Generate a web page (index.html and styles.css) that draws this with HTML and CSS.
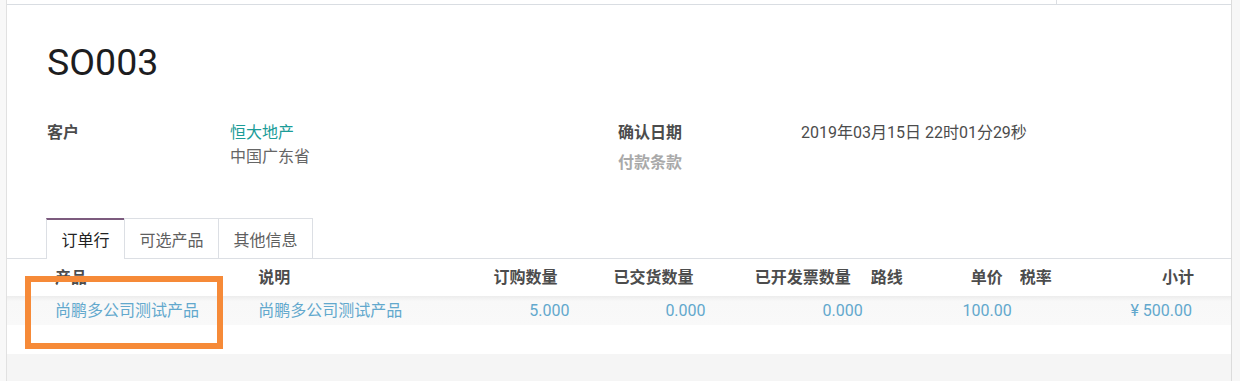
FILE: index.html
```html
<!DOCTYPE html>
<html lang="zh-CN">
<head>
<meta charset="utf-8">
<title>SO003</title>
<link rel="stylesheet" href="styles.css">
</head>
<body>
<div class="page">
  <div class="edge-left"></div>
  <div class="main">
    <div class="topbar"><div class="topbar-left"></div><div class="topbar-right"></div></div>
    <div class="sheet">
      <h1 class="title">SO003</h1>
      <div class="groups">
        <div class="group">
          <div class="label">客户</div>
          <div class="value"><span class="link">恒大地产</span><div class="addr">中国广东省</div></div>
        </div>
        <div class="group">
          <div class="label">确认日期</div>
          <div class="value">2019年03月15日 22时01分29秒</div>
          <div class="label muted">付款条款</div>
          <div class="value"></div>
        </div>
      </div>
      <div class="tabs">
        <div class="tab active">订单行</div>
        <div class="tab">可选产品</div>
        <div class="tab">其他信息</div>
      </div>
      <table class="lines">
        <colgroup>
          <col class="w1"><col class="w2"><col class="w3"><col class="w4"><col class="w5">
          <col class="w6"><col class="w7"><col class="w8"><col class="w9"><col class="w10">
        </colgroup>
        <thead>
          <tr>
            <th class="first">产品</th>
            <th>说明</th>
            <th class="num">订购数量</th>
            <th class="num">已交货数量</th>
            <th class="num">已开发票数量</th>
            <th class="tight">路线</th>
            <th class="num price">单价</th>
            <th class="tight">税率</th>
            <th class="num total">小计</th>
            <th></th>
          </tr>
        </thead>
        <tbody>
          <tr class="data">
            <td class="first">尚鹏多公司测试产品</td>
            <td>尚鹏多公司测试产品</td>
            <td class="num">5.000</td>
            <td class="num">0.000</td>
            <td class="num">0.000</td>
            <td class="tight"></td>
            <td class="num">100.00</td>
            <td class="tight"></td>
            <td class="num">¥ 500.00</td>
            <td></td>
          </tr>
          <tr class="blank">
            <td colspan="10"></td>
          </tr>
        </tbody>
      </table>
    </div>
  </div>
  <div class="edge-right"></div>
</div>
<div class="highlight"></div>
</body>
</html>
```

FILE: styles.css
```css
html, body {
  margin: 0;
  padding: 0;
}
body {
  width: 1240px;
  height: 381px;
  overflow: hidden;
  background: #f5f5f5;
  font-family: Roboto, "Noto Sans CJK SC", sans-serif;
  font-size: 16px;
  color: #4c4c4c;
  position: relative;
}
.page {
  display: flex;
  height: 381px;
}
.edge-left {
  width: 6px;
  background: #f8f8f8;
  border-right: 1px solid #e1e1e1;
}
.edge-right {
  width: 8px;
  background: #f7f7f7;
  border-left: 1px solid #dcdcdc;
}
.main {
  flex: 1;
  display: flex;
  flex-direction: column;
  background: #f5f5f5;
}
.topbar {
  height: 4px;
  display: flex;
  background: #fff;
  border-bottom: 1px solid #d9dde2;
}
.topbar-left {
  width: 1049px;
}
.topbar-right {
  flex: 1;
  border-left: 1px solid #dcdfe3;
}
.sheet {
  background: #fff;
  padding-top: 35px;
}
.title {
  margin: 0;
  padding-left: 40px;
  font-size: 37.5px;
  line-height: 44px;
  font-weight: 400;
  color: #1d1d1f;
}
.groups {
  display: grid;
  grid-template-columns: 571px 571px;
  padding-left: 40px;
  margin-top: 37px;
  line-height: 24px;
}
.group {
  display: grid;
  grid-template-columns: 183px 1fr;
  row-gap: 6px;
  align-content: start;
}
.label {
  font-weight: 700;
  color: #4c4c4c;
}
.label.muted {
  color: #a9a9a9;
}
.value {
  color: #4c4c4c;
}
.link {
  color: #1b9c98;
}
.addr {
  color: #666;
}
.tabs {
  display: flex;
  margin-top: 43px;
  padding-left: 40px;
  border-bottom: 1px solid #dcdfe4;
}
.tab {
  box-sizing: border-box;
  height: 40px;
  padding: 0 14.5px;
  display: flex;
  align-items: center;
  border: 1px solid #dcdfe4;
  border-bottom: none;
  margin-left: -1px;
  color: #5f5f5f;
  background: #fff;
}
.tab.active {
  height: 41px;
  margin-bottom: -1px;
  border-top: 2px solid #7c5b7e;
  color: #222;
  padding-bottom: 1px;
}
.lines {
  width: 100%;
  table-layout: fixed;
  border-collapse: collapse;
  border-spacing: 0;
}
.w1 { width: 243px; }
.w2 { width: 230px; }
.w3 { width: 97px; }
.w4 { width: 136px; }
.w5 { width: 157px; }
.w6 { width: 60px; }
.w7 { width: 89px; }
.w8 { width: 61px; }
.w9 { width: 119px; }
.w10 { width: 31px; }
.lines th, .lines td {
  padding: 0 8px;
  text-align: left;
  white-space: nowrap;
  overflow: hidden;
  line-height: 20px;
}
.lines th {
  height: 37px;
  font-weight: 700;
  color: #4c4c4c;
}
.lines th.num {
  text-align: right;
  padding-right: 20px;
}
.lines th.price {
  padding-right: 17px;
}
.lines th.total {
  padding-right: 6px;
}
.lines td.num {
  text-align: right;
}
.lines .first {
  padding-left: 48px;
}
.lines .tight {
  padding-left: 0;
}
.data td {
  height: 29px;
  color: #62a8cd;
  background: linear-gradient(#ececec, #f8f8f8 5px, #f9f9f9);
}
.blank td {
  height: 29px;
  background: #fff;
}
.highlight {
  position: absolute;
  left: 25px;
  top: 276px;
  width: 198px;
  height: 73px;
  box-sizing: border-box;
  border: 6px solid #f68a38;
}
```
